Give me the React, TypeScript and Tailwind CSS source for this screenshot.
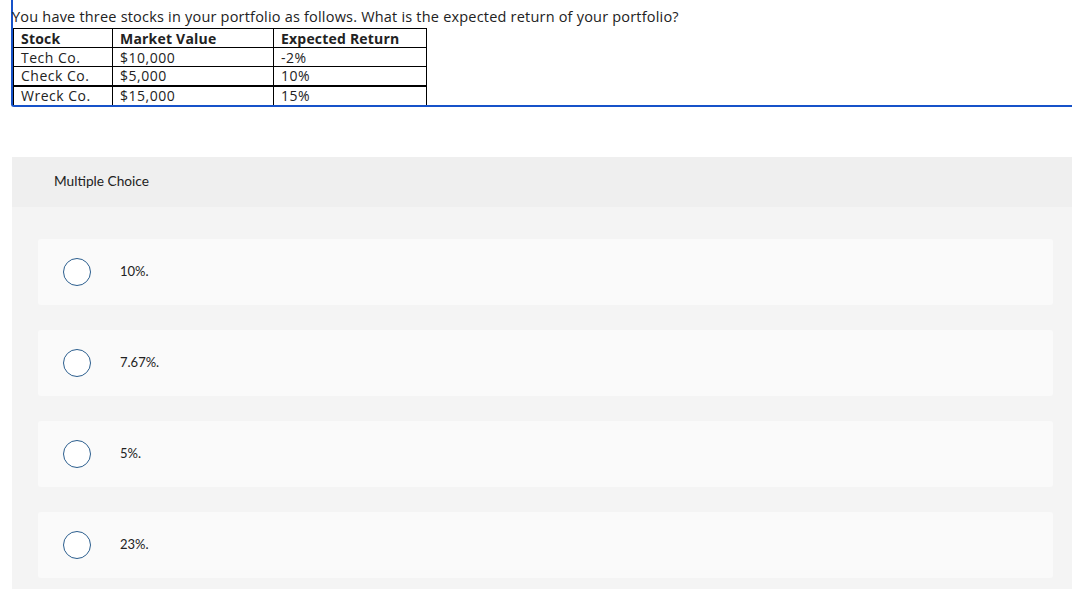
import React from "react";

const rows = [
  ["Tech Co.", "$10,000", "-2%"],
  ["Check Co.", "$5,000", "10%"],
  ["Wreck Co.", "$15,000", "15%"],
];

const options = ["10%.", "7.67%.", "5%.", "23%."];

export default function App() {
  return (
    <div
      className="w-[1072px] h-[589px] bg-white overflow-hidden text-[#222]"
      style={{ fontFamily: "Lato, 'Liberation Sans', sans-serif" }}
    >
      <div
        className="ml-[11px] border-l-2 border-b-2 border-[#1652c9] rounded-bl-[3px]"
        style={{ fontFamily: "'Open Sans', 'Liberation Sans', sans-serif" }}
      >
        <p className="pt-[7px] text-[14.5px] leading-[20px] tracking-[0.2px] text-[#222] -ml-[1px]">
          You have three stocks in your portfolio as follows. What is the expected return of your portfolio?
        </p>
        <table className="mt-[1px] border-collapse text-[14px] leading-[17px] text-[#222]">
          <thead>
            <tr>
              <th className="w-[99px] border border-black px-[7px] text-left font-bold tracking-[0.2px] h-[19px]">Stock</th>
              <th className="w-[161px] border border-black px-[7px] text-left font-bold tracking-[0.2px]">Market Value</th>
              <th className="w-[153px] border border-black px-[7px] text-left font-bold tracking-[0.2px]">Expected Return</th>
            </tr>
          </thead>
          <tbody>
            {rows.map((r, i) => (
              <tr key={i}>
                {r.map((c, j) => (
                  <td
                    key={j}
                    className={`border border-black px-[7px] h-[19px] tracking-[0.5px] ${i === 2 ? "border-t-2 border-b-0" : ""}`}
                  >
                    {c}
                  </td>
                ))}
              </tr>
            ))}
          </tbody>
        </table>
      </div>

      <div className="mt-[50px] ml-[12px] bg-[#f4f4f4] h-[500px]">
        <div className="h-[50px] bg-[#efefef] flex items-center pl-[42px] text-[13.7px] text-[#222]">
          Multiple Choice
        </div>
        <div className="pt-[32px] pl-[26px] pr-[19px] flex flex-col gap-[25px]">
          {options.map((o) => (
            <div key={o} className="h-[66px] bg-[#fafafa] rounded-[3px] flex items-center">
              <div className="ml-[25px] w-[28px] h-[28px] rounded-full border-[1.5px] border-[#2b5e8e] bg-white" />
              <span className="ml-[29px] text-[13px] text-[#222]">{o}</span>
            </div>
          ))}
        </div>
      </div>
    </div>
  );
}
